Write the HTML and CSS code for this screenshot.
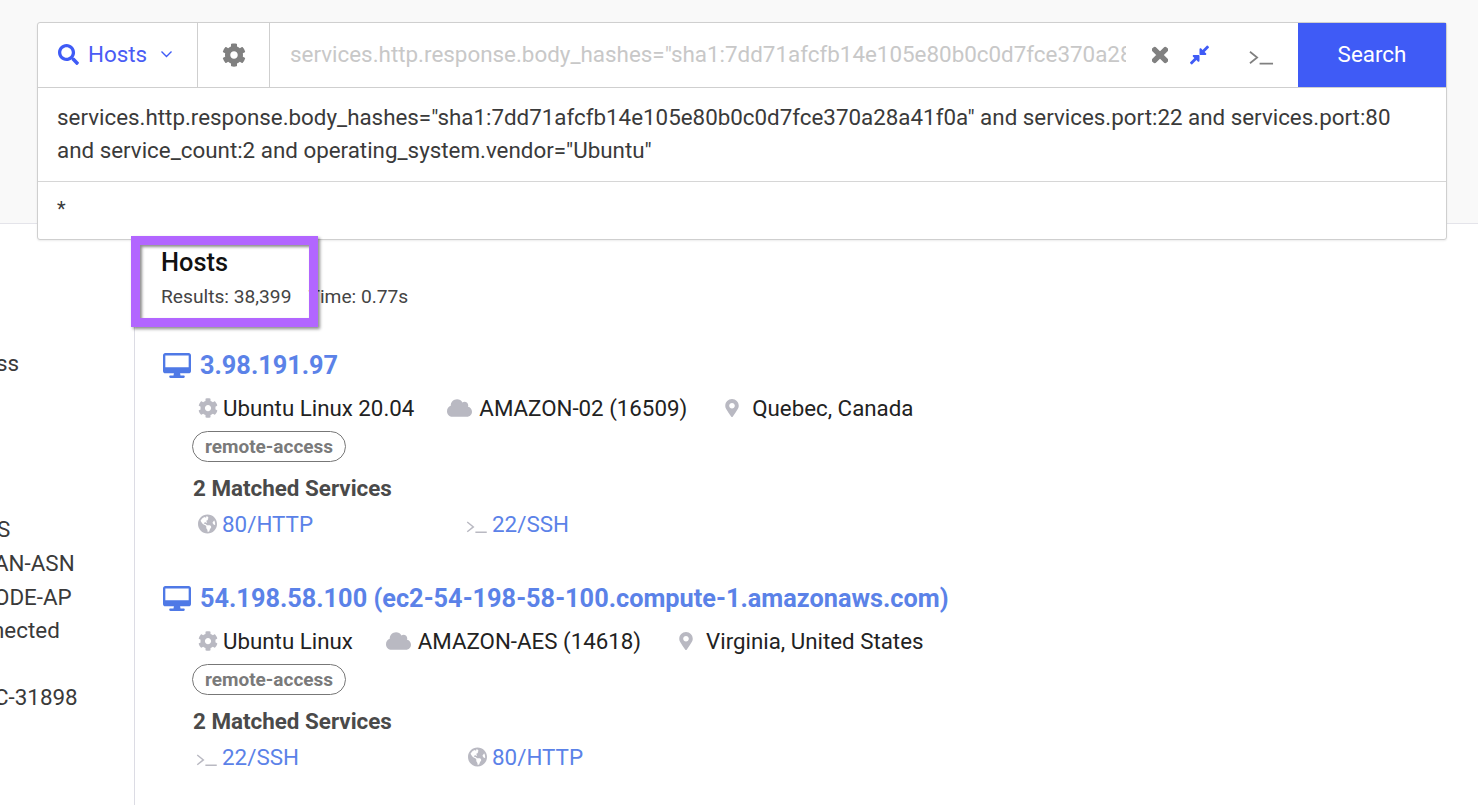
FILE: index.html
```html
<!DOCTYPE html>
<html lang="en">
<head>
<meta charset="utf-8">
<title>Hosts</title>
<link rel="stylesheet" href="styles.css">
</head>
<body>
<header class="top">
  <div class="searchbox">
    <div class="bar">
      <div class="scope">
        <svg class="i-search" viewBox="0 0 512 512"><path d="M505 442.7L405.3 343c-4.5-4.5-10.6-7-17-7H372c27.6-35.3 44-79.7 44-128C416 93.1 322.9 0 208 0S0 93.1 0 208s93.1 208 208 208c48.3 0 92.7-16.4 128-44v16.3c0 6.4 2.5 12.5 7 17l99.7 99.7c9.4 9.4 24.6 9.4 33.9 0l28.3-28.3c9.4-9.4 9.4-24.6.1-34zM208 336c-70.7 0-128-57.2-128-128 0-70.7 57.2-128 128-128 70.7 0 128 57.2 128 128 0 70.7-57.2 128-128 128z"/></svg>
        <span>Hosts</span>
        <svg class="i-chev" viewBox="0 0 12 8"><path d="M1 1.5l5 5 5-5"/></svg>
      </div>
      <div class="settings">
        <svg class="i-cog" viewBox="0 0 512 512"><use href="#cog"/></svg>
      </div>
      <div class="input">services.http.response.body_hashes="sha1:7dd71afcfb14e105e80b0c0d7fce370a28a41f0a" and services.port:22 and services.port:80</div>
      <div class="tools">
        <svg class="i-x" viewBox="0 0 352 512"><path d="M242.72 256l100.07-100.07c12.28-12.28 12.28-32.19 0-44.48l-22.24-22.24c-12.28-12.28-32.19-12.28-44.48 0L176 189.28 75.93 89.21c-12.28-12.28-32.19-12.28-44.48 0L9.21 111.45c-12.28 12.28-12.28 32.19 0 44.48L109.28 256 9.21 356.07c-12.28 12.28-12.28 32.19 0 44.48l22.24 22.24c12.28 12.28 32.2 12.28 44.48 0L176 322.72l100.07 100.07c12.28 12.28 32.2 12.28 44.48 0l22.24-22.24c12.28-12.28 12.28-32.19 0-44.48L242.72 256z"/></svg>
        <svg class="i-compress" viewBox="0 0 448 512"><path d="M4.686 427.314L104 328l-32.922-31.029C55.958 281.851 66.666 256 88.048 256h112C213.303 256 224 266.745 224 280v112c0 21.382-25.803 32.09-40.922 16.971L152 376l-99.314 99.314c-6.248 6.248-16.379 6.248-22.627 0L4.686 449.941c-6.248-6.248-6.248-16.379 0-22.627zM443.314 84.686L344 184l32.922 31.029c15.12 15.12 4.412 40.971-16.97 40.971h-112C234.697 256 224 245.255 224 232V120c0-21.382 25.803-32.09 40.922-16.971L296 136l99.314-99.314c6.248-6.248 16.379-6.248 22.627 0l25.373 25.373c6.248 6.248 6.248 16.379 0 22.627z"/></svg>
        <svg class="i-term-lg" viewBox="0 0 26 16"><path d="M1 2.5l7.5 6-7.5 6M11 15h14"/></svg>
      </div>
      <button class="go">Search</button>
    </div>
    <div class="query">services.http.response.body_hashes="sha1:7dd71afcfb14e105e80b0c0d7fce370a28a41f0a" and services.port:22 and services.port:80 and service_count:2 and operating_system.vendor="Ubuntu"</div>
    <div class="star">*</div>
  </div>
</header>

<div class="layout">
  <aside class="side">
    <div class="s-row s-first">ss</div>
    <div class="s-row s-gap">S</div>
    <div class="s-row s-cut">AN-ASN</div>
    <div class="s-row s-cut">ODE-AP</div>
    <div class="s-row s-n">nected</div>
    <div class="s-row s-gap2 s-cut">C-31898</div>
  </aside>
  <main class="results">
    <h1 class="title">Hosts</h1>
    <div class="stats"><span>Results: 38,399</span><span>Time: 0.77s</span></div>

    <article class="host">
      <h2 class="host-name">
        <svg class="i-desk" viewBox="0 0 576 512"><use href="#desk"/></svg>
        <a>3.98.191.97</a>
      </h2>
      <div class="meta">
        <span class="m os"><svg class="i-m-cog" viewBox="0 0 512 512"><use href="#cog"/></svg>Ubuntu Linux 20.04</span>
        <span class="m asn"><svg class="i-cloud" viewBox="0 0 640 512"><use href="#cloud"/></svg>AMAZON-02 (16509)</span>
        <span class="m loc"><svg class="i-pin" viewBox="0 0 384 512"><use href="#pin"/></svg>Quebec, Canada</span>
      </div>
      <span class="tag">remote-access</span>
      <div class="matched">2 Matched Services</div>
      <div class="services">
        <a class="svc"><svg class="i-globe" viewBox="0 0 496 512"><use href="#globe"/></svg>80/HTTP</a>
        <a class="svc"><svg class="i-term" viewBox="0 0 26 16"><use href="#term"/></svg>22/SSH</a>
      </div>
    </article>

    <article class="host">
      <h2 class="host-name">
        <svg class="i-desk" viewBox="0 0 576 512"><use href="#desk"/></svg>
        <a>54.198.58.100 (ec2-54-198-58-100.compute-1.amazonaws.com)</a>
      </h2>
      <div class="meta">
        <span class="m os"><svg class="i-m-cog" viewBox="0 0 512 512"><use href="#cog"/></svg>Ubuntu Linux</span>
        <span class="m asn"><svg class="i-cloud" viewBox="0 0 640 512"><use href="#cloud"/></svg>AMAZON-AES (14618)</span>
        <span class="m loc"><svg class="i-pin" viewBox="0 0 384 512"><use href="#pin"/></svg>Virginia, United States</span>
      </div>
      <span class="tag">remote-access</span>
      <div class="matched">2 Matched Services</div>
      <div class="services">
        <a class="svc"><svg class="i-term" viewBox="0 0 26 16"><use href="#term"/></svg>22/SSH</a>
        <a class="svc"><svg class="i-globe" viewBox="0 0 496 512"><use href="#globe"/></svg>80/HTTP</a>
      </div>
    </article>
    <div class="highlight"></div>
  </main>
</div>

<svg class="defs" width="0" height="0" aria-hidden="true">
  <defs>
    <path id="cog" d="M487.4 315.7l-42.6-24.6c4.3-23.2 4.3-47 0-70.2l42.6-24.6c4.9-2.8 7.1-8.6 5.5-14-11.1-35.6-30-67.8-54.7-94.6-3.8-4.1-10-5.1-14.8-2.3L380.8 110c-17.9-15.4-38.5-27.3-60.8-35.1V25.8c0-5.6-3.9-10.5-9.4-11.7-36.7-8.2-74.3-7.8-109.2 0-5.5 1.2-9.4 6.1-9.4 11.7V75c-22.2 7.9-42.8 19.8-60.8 35.1L88.7 85.5c-4.9-2.8-11-1.9-14.8 2.3-24.7 26.7-43.6 58.9-54.7 94.6-1.7 5.4.6 11.2 5.5 14L67.3 221c-4.3 23.2-4.3 47 0 70.2l-42.6 24.6c-4.9 2.8-7.1 8.6-5.5 14 11.1 35.6 30 67.8 54.7 94.6 3.8 4.1 10 5.1 14.8 2.3l42.6-24.6c17.9 15.4 38.5 27.3 60.8 35.1v49.2c0 5.6 3.9 10.5 9.4 11.7 36.7 8.2 74.3 7.8 109.2 0 5.5-1.2 9.4-6.1 9.4-11.7v-49.2c22.2-7.9 42.8-19.8 60.8-35.1l42.6 24.6c4.9 2.8 11 1.9 14.8-2.3 24.7-26.7 43.6-58.9 54.7-94.6 1.5-5.5-.7-11.3-5.6-14.1zM256 336c-44.1 0-80-35.9-80-80s35.9-80 80-80 80 35.9 80 80-35.9 80-80 80z"/>
    <path id="desk" d="M528 0H48C21.5 0 0 21.5 0 48v320c0 26.5 21.5 48 48 48h176l-8 48h-64c-13 0-24 10-24 24s11 24 24 24h272c13 0 24-10 24-24s-11-24-24-24h-64l-8-48h176c26.5 0 48-21.5 48-48V48c0-26.5-21.5-48-48-48zm0 290H48V48h480v242z"/>
    <path id="cloud" d="M537.6 226.6c4.1-10.7 6.4-22.4 6.4-34.6 0-53-43-96-96-96-19.7 0-38.1 6-53.3 16.2C367 64.2 315.3 32 256 32c-88.4 0-160 71.6-160 160 0 2.7.1 5.4.2 8.1C40.2 219.8 0 273.2 0 336c0 79.5 64.5 144 144 144h368c70.7 0 128-57.3 128-128 0-61.9-44-113.6-102.4-125.4z"/>
    <path id="pin" d="M172.268 501.67C26.97 291.031 0 260.495 0 192 0 85.961 85.961 0 192 0s192 85.961 192 192c0 68.495-26.97 99.031-172.268 309.67-9.535 13.774-29.93 13.773-39.464 0zM192 272c44.183 0 80-35.817 80-80s-35.817-80-80-80-80 35.817-80 80 35.817 80 80 80z"/>
    <path id="globe" d="M248 8C111.03 8 0 119.03 0 256s111.03 248 248 248 248-111.03 248-248S384.97 8 248 8zm82.29 357.6c-3.9 3.88-7.99 7.95-11.31 11.28-2.99 3-5.1 6.7-6.17 10.71-1.51 5.66-2.73 11.38-4.77 16.87l-17.39 46.85c-13.76 3-28 4.69-42.65 4.69v-27.38c1.69-12.62-7.64-36.26-22.63-51.25-6-6-9.37-14.14-9.37-22.63v-32.01c0-11.64-6.27-22.34-16.46-27.97-14.37-7.95-34.81-19.06-48.81-26.11-11.48-5.78-22.1-13.14-31.65-21.75l-.8-.72a114.792 114.792 0 0 1-18.06-20.74c-9.38-13.77-24.66-36.42-34.59-51.14 20.47-45.5 57.36-82.04 103.2-101.89l24.01 12.01C203.48 89.74 216 82.01 216 70.11v-11.3c7.99-1.29 16.12-2.11 24.39-2.42l28.3 28.3c6.25 6.25 6.25 16.38 0 22.63L264 112l-10.34 10.34c-3.12 3.12-3.12 8.19 0 11.31l4.69 4.69c3.12 3.12 3.12 8.19 0 11.31l-8 8a8.008 8.008 0 0 1-5.66 2.34h-8.99c-2.08 0-4.08.81-5.58 2.27l-9.92 9.65a8.008 8.008 0 0 0-1.58 9.31l15.59 31.19c2.66 5.32-1.21 11.58-7.15 11.58h-5.64c-1.93 0-3.79-.7-5.24-1.96l-9.28-8.06a16.017 16.017 0 0 0-15.55-3.1l-31.17 10.39a11.95 11.95 0 0 0-8.17 11.34c0 4.53 2.56 8.66 6.61 10.69l11.08 5.54c9.41 4.71 19.79 7.16 30.31 7.16s22.59 27.29 32 32h66.75c8.49 0 16.62 3.37 22.63 9.37l13.69 13.69a30.503 30.503 0 0 1 8.93 21.57 46.536 46.536 0 0 1-13.72 32.98zM417 274.25c-5.79-1.45-10.84-5-14.15-9.97l-17.98-26.97a23.97 23.97 0 0 1 0-26.62l19.59-29.38c2.32-3.47 5.5-6.29 9.24-8.15l12.98-6.49C440.2 193.59 448 223.87 448 256c0 8.67-.74 17.16-1.82 25.54L417 274.25z"/>
    <path id="term" d="M1 2.5l7.5 6-7.5 6M11 15h14"/>
  </defs>
</svg>
</body>
</html>
```
FILE: styles.css
```css
* { box-sizing: border-box; }
html, body { margin: 0; height: 100%; overflow: hidden; }
body { font-family: Roboto, "Liberation Sans", sans-serif; font-size: 22.4px; color: #3a3a3a; background: #fff; }
svg { display: block; flex: none; }
.defs { position: absolute; }

.top { height: 224px; background: #f9f9f9; border-bottom: 1px solid #e4e4ea; padding: 22px 31px 0 37px; }
.searchbox { position: relative; z-index: 2; height: 218px; background: #fff; border: 1px solid #cfcfcf; border-radius: 3px; display: flex; flex-direction: column; box-shadow: 0 1px 2px rgba(0,0,0,.08); }
.bar { height: 65px; display: flex; align-items: stretch; border-bottom: 1px solid #cfcfcf; flex: none; }
.scope { width: 160px; border-right: 1px solid #cfcfcf; display: flex; align-items: center; padding-left: 20px; color: #4a5cf5; gap: 9px; padding-bottom: 2px; }
.i-search { width: 21px; height: 21px; fill: #3f5bf6; }
.i-chev { width: 13px; height: 8px; fill: none; stroke: #3f5bf6; stroke-width: 1.4; margin-left: 4px; }
.settings { width: 72px; border-right: 1px solid #cfcfcf; display: flex; align-items: center; justify-content: center; }
.i-cog { width: 24px; height: 24px; fill: #808080; }
.input { width: 856px; padding-left: 20px; color: #c8c8c8; white-space: nowrap; overflow: hidden; line-height: 62px; }
.tools { width: 172px; display: flex; align-items: center; }
.i-x { width: 16px; height: 22px; fill: #808080; stroke: #808080; stroke-width: 30; margin-left: 26px; }
.i-compress { width: 19px; height: 22px; fill: #3f5bf6; margin-left: 22px; }
.i-term-lg { width: 25px; height: 16px; fill: none; stroke: #808080; stroke-width: 1.8; margin-left: 40px; margin-top: 4px; }
.go { flex: 1; border: 0; background: #3f5bf6; color: #fff; font: 400 22.4px Roboto, sans-serif; margin: 0; padding: 0 0 2px; }
.query { padding: 13px 19px 0; height: 94px; border-bottom: 1px solid #d6d6d6; line-height: 33px; flex: none; font-size: 22.37px; }
.star { padding: 11px 19px; line-height: 33px; font-size: 20px; }

.layout { display: flex; height: 581px; }
.side { width: 135px; flex: none; border-right: 1px solid #dcdce4; overflow: hidden; padding-top: 123px; }
.s-row { height: 33.5px; line-height: 33.5px; white-space: nowrap; }
.s-first { margin-left: -4px; }
.s-gap { margin-top: 132px; margin-left: -3px; height: 34.5px; }
.s-gap2 { margin-top: 33px; }
.s-cut { margin-left: -6px; }
.s-n { margin-left: -8px; }

.results { position: relative; flex: 1; padding: 20px 0 0 26px; }
.title { margin: 0; font-size: 25.4px; font-weight: 500; color: #111; line-height: 36px; }
.stats { display: flex; gap: 17px; font-size: 19.2px; line-height: 28px; margin-top: 3px; margin-bottom: 34px; color: #444; }
.host { height: 233px; }
.host-name { margin: 0 0 0 2px; display: flex; align-items: center; font-size: 25.3px; font-weight: 700; color: #5b82e8; height: 40px; gap: 9px; }
.i-desk { width: 28px; height: 25px; fill: #4f79e6; }
.meta { margin: 1px 0 0 37px; display: flex; height: 44px; align-items: center; color: #222; font-size: 22.3px; }
.m { display: flex; align-items: center; white-space: nowrap; }
.asn { margin-left: 33px; }
.loc { margin-left: 38px; }
.i-m-cog { width: 20px; height: 20px; fill: #b9b9c2; margin-right: 5px; }
.i-cloud { width: 25px; height: 20px; fill: #b9b9c2; margin-right: 7px; }
.i-pin { width: 14px; height: 18px; fill: #b9b9c2; margin-right: 13px; }
.tag { display: block; margin: 1px 0 0 31px; height: 31px; width: 154px; border: 1px solid #777; border-radius: 16px; text-align: center; font-weight: 700; font-size: 19px; line-height: 29px; color: #7a7a7a; }
.matched { margin: 11px 0 0 32px; font-weight: 700; color: #4a4a4a; line-height: 30px; }
.services { display: grid; grid-template-columns: 270px 200px; margin: 3px 0 0 35px; height: 36px; }
.svc { display: flex; align-items: center; color: #5b82e8; }
.i-globe { width: 19px; height: 20px; fill: #b9b9c2; margin: 0 5px 0 2px; }
.i-term { width: 22px; height: 13px; margin: 4px 4px 0 0; fill: none; stroke: #b9b9c2; stroke-width: 1.8; }

.highlight { position: absolute; left: -4px; top: 12px; width: 187px; height: 91px; border: 9px solid #b266ff; box-shadow: 2px 2px 3px rgba(0,0,0,.45), inset 2px 2px 3px rgba(0,0,0,.45); z-index: 3; pointer-events: none; }
```
